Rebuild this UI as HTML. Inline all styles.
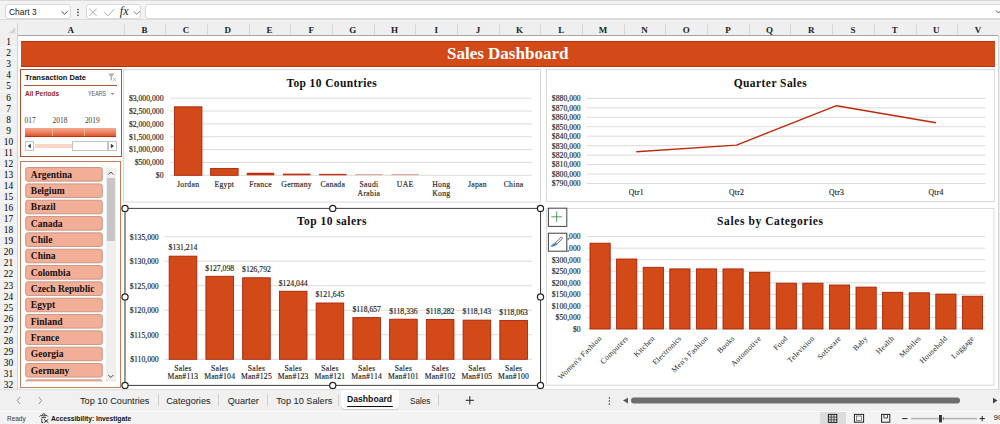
<!DOCTYPE html>
<html><head><meta charset="utf-8"><style>
*{box-sizing:border-box;margin:0;padding:0}
html,body{width:1000px;height:424px;overflow:hidden;background:#fff}
body{position:relative;font-family:"Liberation Sans", sans-serif;color:#222}
.a{position:absolute}
.t{position:absolute;white-space:nowrap;line-height:1}
</style></head><body>

<div class="a" style="left:0;top:0;width:1000px;height:23px;background:#f3f3f3"></div>
<div class="a" style="left:0;top:0;width:1000px;height:1.2px;background:#dadada"></div>
<div class="a" style="left:4.8px;top:4.4px;width:66.4px;height:14.9px;background:#fff;border:1px solid #d8d8d8;border-radius:3px"></div>
<div class="t" style="left:8.5px;top:7.6px;font-size:9.2px;font-family:'Liberation Sans', sans-serif;color:#1a1a1a;transform:scaleX(0.92);transform-origin:0 0">Chart 3</div>
<svg class="a" style="left:0;top:0" width="160" height="23"><path d="M61.5 11.2 L64.6 14.2 L67.7 11.2" fill="none" stroke="#333" stroke-width="0.9"/><circle cx="78" cy="9.6" r="0.8" fill="#333"/><circle cx="78" cy="12.4" r="0.8" fill="#333"/><circle cx="78" cy="15.2" r="0.8" fill="#333"/></svg>
<div class="a" style="left:85.6px;top:4.4px;width:55.4px;height:14.9px;background:#fff;border:1px solid #d8d8d8;border-radius:3px"></div>
<svg class="a" style="left:0;top:0" width="160" height="23"><path d="M89.3 8.6 L96.7 16 M96.7 8.6 L89.3 16" stroke="#a0a0a0" stroke-width="0.9" fill="none"/><path d="M104.3 12.4 L107.8 15.8 L114.6 8.9" stroke="#a0a0a0" stroke-width="0.9" fill="none"/><path d="M133.6 11.2 L136.8 14.2 L140 11.2" fill="none" stroke="#777" stroke-width="0.9"/></svg>
<div class="t" style="left:119.8px;top:5.4px;font-size:12px;font-family:'Liberation Serif', serif;font-style:italic;color:#222">fx</div>
<div class="a" style="left:144.6px;top:4.2px;width:870px;height:15px;background:#fff;border:1px solid #d8d8d8;border-radius:3px"></div>
<svg class="a" style="left:990px;top:0" width="10" height="23"><path d="M6 10.5 L8.5 13 L11 10.5" fill="none" stroke="#444" stroke-width="0.9"/></svg>
<div class="a" style="left:0;top:19.6px;width:1000px;height:16px;background:#efefef"></div>
<div class="a" style="left:0;top:19.2px;width:1000px;height:0.8px;background:#dcdcdc"></div>
<div class="a" style="left:0;top:35.3px;width:1000px;height:1px;background:#a6a6a6"></div>
<div class="a" style="left:0;top:23px;width:18px;height:366px;background:#f0f0f0"></div>
<div class="a" style="left:17.3px;top:23px;width:1px;height:366px;background:#d4d4d4"></div>
<svg class="a" style="left:0;top:0" width="20" height="40"><path d="M8.5 33.2 L15.2 33.2 L15.2 27.2 Z" fill="#d4d4d4"/></svg>
<div class="t" style="left:60.80px;width:20px;text-align:center;top:26px;font-size:9px;font-weight:bold;font-family:'Liberation Serif', serif;color:#222">A</div>
<div class="t" style="left:134.44px;width:20px;text-align:center;top:26px;font-size:9px;font-weight:bold;font-family:'Liberation Serif', serif;color:#222">B</div>
<div class="a" style="left:123.60px;top:24px;width:1px;height:11px;background:#d8d8d8"></div>
<div class="t" style="left:176.12px;width:20px;text-align:center;top:26px;font-size:9px;font-weight:bold;font-family:'Liberation Serif', serif;color:#222">C</div>
<div class="a" style="left:165.28px;top:24px;width:1px;height:11px;background:#d8d8d8"></div>
<div class="t" style="left:217.80px;width:20px;text-align:center;top:26px;font-size:9px;font-weight:bold;font-family:'Liberation Serif', serif;color:#222">D</div>
<div class="a" style="left:206.96px;top:24px;width:1px;height:11px;background:#d8d8d8"></div>
<div class="t" style="left:259.48px;width:20px;text-align:center;top:26px;font-size:9px;font-weight:bold;font-family:'Liberation Serif', serif;color:#222">E</div>
<div class="a" style="left:248.64px;top:24px;width:1px;height:11px;background:#d8d8d8"></div>
<div class="t" style="left:301.16px;width:20px;text-align:center;top:26px;font-size:9px;font-weight:bold;font-family:'Liberation Serif', serif;color:#222">F</div>
<div class="a" style="left:290.32px;top:24px;width:1px;height:11px;background:#d8d8d8"></div>
<div class="t" style="left:342.84px;width:20px;text-align:center;top:26px;font-size:9px;font-weight:bold;font-family:'Liberation Serif', serif;color:#222">G</div>
<div class="a" style="left:332.00px;top:24px;width:1px;height:11px;background:#d8d8d8"></div>
<div class="t" style="left:384.52px;width:20px;text-align:center;top:26px;font-size:9px;font-weight:bold;font-family:'Liberation Serif', serif;color:#222">H</div>
<div class="a" style="left:373.68px;top:24px;width:1px;height:11px;background:#d8d8d8"></div>
<div class="t" style="left:426.20px;width:20px;text-align:center;top:26px;font-size:9px;font-weight:bold;font-family:'Liberation Serif', serif;color:#222">I</div>
<div class="a" style="left:415.36px;top:24px;width:1px;height:11px;background:#d8d8d8"></div>
<div class="t" style="left:467.88px;width:20px;text-align:center;top:26px;font-size:9px;font-weight:bold;font-family:'Liberation Serif', serif;color:#222">J</div>
<div class="a" style="left:457.04px;top:24px;width:1px;height:11px;background:#d8d8d8"></div>
<div class="t" style="left:509.56px;width:20px;text-align:center;top:26px;font-size:9px;font-weight:bold;font-family:'Liberation Serif', serif;color:#222">K</div>
<div class="a" style="left:498.72px;top:24px;width:1px;height:11px;background:#d8d8d8"></div>
<div class="t" style="left:551.24px;width:20px;text-align:center;top:26px;font-size:9px;font-weight:bold;font-family:'Liberation Serif', serif;color:#222">L</div>
<div class="a" style="left:540.40px;top:24px;width:1px;height:11px;background:#d8d8d8"></div>
<div class="t" style="left:592.92px;width:20px;text-align:center;top:26px;font-size:9px;font-weight:bold;font-family:'Liberation Serif', serif;color:#222">M</div>
<div class="a" style="left:582.08px;top:24px;width:1px;height:11px;background:#d8d8d8"></div>
<div class="t" style="left:634.60px;width:20px;text-align:center;top:26px;font-size:9px;font-weight:bold;font-family:'Liberation Serif', serif;color:#222">N</div>
<div class="a" style="left:623.76px;top:24px;width:1px;height:11px;background:#d8d8d8"></div>
<div class="t" style="left:676.28px;width:20px;text-align:center;top:26px;font-size:9px;font-weight:bold;font-family:'Liberation Serif', serif;color:#222">O</div>
<div class="a" style="left:665.44px;top:24px;width:1px;height:11px;background:#d8d8d8"></div>
<div class="t" style="left:717.96px;width:20px;text-align:center;top:26px;font-size:9px;font-weight:bold;font-family:'Liberation Serif', serif;color:#222">P</div>
<div class="a" style="left:707.12px;top:24px;width:1px;height:11px;background:#d8d8d8"></div>
<div class="t" style="left:759.64px;width:20px;text-align:center;top:26px;font-size:9px;font-weight:bold;font-family:'Liberation Serif', serif;color:#222">Q</div>
<div class="a" style="left:748.80px;top:24px;width:1px;height:11px;background:#d8d8d8"></div>
<div class="t" style="left:801.32px;width:20px;text-align:center;top:26px;font-size:9px;font-weight:bold;font-family:'Liberation Serif', serif;color:#222">R</div>
<div class="a" style="left:790.48px;top:24px;width:1px;height:11px;background:#d8d8d8"></div>
<div class="t" style="left:843.00px;width:20px;text-align:center;top:26px;font-size:9px;font-weight:bold;font-family:'Liberation Serif', serif;color:#222">S</div>
<div class="a" style="left:832.16px;top:24px;width:1px;height:11px;background:#d8d8d8"></div>
<div class="t" style="left:884.68px;width:20px;text-align:center;top:26px;font-size:9px;font-weight:bold;font-family:'Liberation Serif', serif;color:#222">T</div>
<div class="a" style="left:873.84px;top:24px;width:1px;height:11px;background:#d8d8d8"></div>
<div class="t" style="left:926.36px;width:20px;text-align:center;top:26px;font-size:9px;font-weight:bold;font-family:'Liberation Serif', serif;color:#222">U</div>
<div class="a" style="left:915.52px;top:24px;width:1px;height:11px;background:#d8d8d8"></div>
<div class="t" style="left:968.04px;width:20px;text-align:center;top:26px;font-size:9px;font-weight:bold;font-family:'Liberation Serif', serif;color:#222">V</div>
<div class="a" style="left:957.20px;top:24px;width:1px;height:11px;background:#d8d8d8"></div>
<div class="t" style="left:0;width:17px;text-align:center;top:38.20px;font-size:9.4px;font-weight:normal;font-family:'Liberation Serif', serif;color:#000">1</div>
<div class="a" style="left:0;top:46.56px;width:17.3px;height:0.7px;background:#f9f9f9"></div>
<div class="t" style="left:0;width:17px;text-align:center;top:49.26px;font-size:9.4px;font-weight:normal;font-family:'Liberation Serif', serif;color:#000">2</div>
<div class="a" style="left:0;top:57.62px;width:17.3px;height:0.7px;background:#f9f9f9"></div>
<div class="t" style="left:0;width:17px;text-align:center;top:60.32px;font-size:9.4px;font-weight:normal;font-family:'Liberation Serif', serif;color:#000">3</div>
<div class="a" style="left:0;top:68.68px;width:17.3px;height:0.7px;background:#f9f9f9"></div>
<div class="t" style="left:0;width:17px;text-align:center;top:71.38px;font-size:9.4px;font-weight:normal;font-family:'Liberation Serif', serif;color:#000">4</div>
<div class="a" style="left:0;top:79.74px;width:17.3px;height:0.7px;background:#f9f9f9"></div>
<div class="t" style="left:0;width:17px;text-align:center;top:82.44px;font-size:9.4px;font-weight:normal;font-family:'Liberation Serif', serif;color:#000">5</div>
<div class="a" style="left:0;top:90.80px;width:17.3px;height:0.7px;background:#f9f9f9"></div>
<div class="t" style="left:0;width:17px;text-align:center;top:93.50px;font-size:9.4px;font-weight:normal;font-family:'Liberation Serif', serif;color:#000">6</div>
<div class="a" style="left:0;top:101.86px;width:17.3px;height:0.7px;background:#f9f9f9"></div>
<div class="t" style="left:0;width:17px;text-align:center;top:104.56px;font-size:9.4px;font-weight:normal;font-family:'Liberation Serif', serif;color:#000">7</div>
<div class="a" style="left:0;top:112.92px;width:17.3px;height:0.7px;background:#f9f9f9"></div>
<div class="t" style="left:0;width:17px;text-align:center;top:115.62px;font-size:9.4px;font-weight:normal;font-family:'Liberation Serif', serif;color:#000">8</div>
<div class="a" style="left:0;top:123.98px;width:17.3px;height:0.7px;background:#f9f9f9"></div>
<div class="t" style="left:0;width:17px;text-align:center;top:126.68px;font-size:9.4px;font-weight:normal;font-family:'Liberation Serif', serif;color:#000">9</div>
<div class="a" style="left:0;top:135.04px;width:17.3px;height:0.7px;background:#f9f9f9"></div>
<div class="t" style="left:0;width:17px;text-align:center;top:137.74px;font-size:9.4px;font-weight:normal;font-family:'Liberation Serif', serif;color:#000">10</div>
<div class="a" style="left:0;top:146.10px;width:17.3px;height:0.7px;background:#f9f9f9"></div>
<div class="t" style="left:0;width:17px;text-align:center;top:148.80px;font-size:9.4px;font-weight:normal;font-family:'Liberation Serif', serif;color:#000">11</div>
<div class="a" style="left:0;top:157.16px;width:17.3px;height:0.7px;background:#f9f9f9"></div>
<div class="t" style="left:0;width:17px;text-align:center;top:159.86px;font-size:9.4px;font-weight:normal;font-family:'Liberation Serif', serif;color:#000">12</div>
<div class="a" style="left:0;top:168.22px;width:17.3px;height:0.7px;background:#f9f9f9"></div>
<div class="t" style="left:0;width:17px;text-align:center;top:170.92px;font-size:9.4px;font-weight:normal;font-family:'Liberation Serif', serif;color:#000">13</div>
<div class="a" style="left:0;top:179.28px;width:17.3px;height:0.7px;background:#f9f9f9"></div>
<div class="t" style="left:0;width:17px;text-align:center;top:181.98px;font-size:9.4px;font-weight:normal;font-family:'Liberation Serif', serif;color:#000">14</div>
<div class="a" style="left:0;top:190.34px;width:17.3px;height:0.7px;background:#f9f9f9"></div>
<div class="t" style="left:0;width:17px;text-align:center;top:193.04px;font-size:9.4px;font-weight:normal;font-family:'Liberation Serif', serif;color:#000">15</div>
<div class="a" style="left:0;top:201.40px;width:17.3px;height:0.7px;background:#f9f9f9"></div>
<div class="t" style="left:0;width:17px;text-align:center;top:204.10px;font-size:9.4px;font-weight:normal;font-family:'Liberation Serif', serif;color:#000">16</div>
<div class="a" style="left:0;top:212.46px;width:17.3px;height:0.7px;background:#f9f9f9"></div>
<div class="t" style="left:0;width:17px;text-align:center;top:215.16px;font-size:9.4px;font-weight:normal;font-family:'Liberation Serif', serif;color:#000">17</div>
<div class="a" style="left:0;top:223.52px;width:17.3px;height:0.7px;background:#f9f9f9"></div>
<div class="t" style="left:0;width:17px;text-align:center;top:226.22px;font-size:9.4px;font-weight:normal;font-family:'Liberation Serif', serif;color:#000">18</div>
<div class="a" style="left:0;top:234.58px;width:17.3px;height:0.7px;background:#f9f9f9"></div>
<div class="t" style="left:0;width:17px;text-align:center;top:237.28px;font-size:9.4px;font-weight:normal;font-family:'Liberation Serif', serif;color:#000">19</div>
<div class="a" style="left:0;top:245.64px;width:17.3px;height:0.7px;background:#f9f9f9"></div>
<div class="t" style="left:0;width:17px;text-align:center;top:248.34px;font-size:9.4px;font-weight:normal;font-family:'Liberation Serif', serif;color:#000">20</div>
<div class="a" style="left:0;top:256.70px;width:17.3px;height:0.7px;background:#f9f9f9"></div>
<div class="t" style="left:0;width:17px;text-align:center;top:259.40px;font-size:9.4px;font-weight:normal;font-family:'Liberation Serif', serif;color:#000">21</div>
<div class="a" style="left:0;top:267.76px;width:17.3px;height:0.7px;background:#f9f9f9"></div>
<div class="t" style="left:0;width:17px;text-align:center;top:270.46px;font-size:9.4px;font-weight:normal;font-family:'Liberation Serif', serif;color:#000">22</div>
<div class="a" style="left:0;top:278.82px;width:17.3px;height:0.7px;background:#f9f9f9"></div>
<div class="t" style="left:0;width:17px;text-align:center;top:281.52px;font-size:9.4px;font-weight:normal;font-family:'Liberation Serif', serif;color:#000">23</div>
<div class="a" style="left:0;top:289.88px;width:17.3px;height:0.7px;background:#f9f9f9"></div>
<div class="t" style="left:0;width:17px;text-align:center;top:292.58px;font-size:9.4px;font-weight:normal;font-family:'Liberation Serif', serif;color:#000">24</div>
<div class="a" style="left:0;top:300.94px;width:17.3px;height:0.7px;background:#f9f9f9"></div>
<div class="t" style="left:0;width:17px;text-align:center;top:303.64px;font-size:9.4px;font-weight:normal;font-family:'Liberation Serif', serif;color:#000">25</div>
<div class="a" style="left:0;top:312.00px;width:17.3px;height:0.7px;background:#f9f9f9"></div>
<div class="t" style="left:0;width:17px;text-align:center;top:314.70px;font-size:9.4px;font-weight:normal;font-family:'Liberation Serif', serif;color:#000">26</div>
<div class="a" style="left:0;top:323.06px;width:17.3px;height:0.7px;background:#f9f9f9"></div>
<div class="t" style="left:0;width:17px;text-align:center;top:325.76px;font-size:9.4px;font-weight:normal;font-family:'Liberation Serif', serif;color:#000">27</div>
<div class="a" style="left:0;top:334.12px;width:17.3px;height:0.7px;background:#f9f9f9"></div>
<div class="t" style="left:0;width:17px;text-align:center;top:336.82px;font-size:9.4px;font-weight:normal;font-family:'Liberation Serif', serif;color:#000">28</div>
<div class="a" style="left:0;top:345.18px;width:17.3px;height:0.7px;background:#f9f9f9"></div>
<div class="t" style="left:0;width:17px;text-align:center;top:347.88px;font-size:9.4px;font-weight:normal;font-family:'Liberation Serif', serif;color:#000">29</div>
<div class="a" style="left:0;top:356.24px;width:17.3px;height:0.7px;background:#f9f9f9"></div>
<div class="t" style="left:0;width:17px;text-align:center;top:358.94px;font-size:9.4px;font-weight:normal;font-family:'Liberation Serif', serif;color:#000">30</div>
<div class="a" style="left:0;top:367.30px;width:17.3px;height:0.7px;background:#f9f9f9"></div>
<div class="t" style="left:0;width:17px;text-align:center;top:370.00px;font-size:9.4px;font-weight:normal;font-family:'Liberation Serif', serif;color:#000">31</div>
<div class="a" style="left:0;top:378.36px;width:17.3px;height:0.7px;background:#f9f9f9"></div>
<div class="t" style="left:0;width:17px;text-align:center;top:381.06px;font-size:9.4px;font-weight:normal;font-family:'Liberation Serif', serif;color:#000">32</div>
<div class="a" style="left:0;top:389.42px;width:17.3px;height:0.7px;background:#f9f9f9"></div>
<div class="a" style="left:20.9px;top:40.8px;width:973.8px;height:25.9px;background:#d34a19;border-top:1px solid #c22d0b;border-bottom:1px solid #c22d0b"></div>
<div class="t" style="left:20.9px;width:973.6px;text-align:center;top:44.6px;font-size:17px;font-weight:bold;font-family:'Liberation Serif', serif;color:#fff">Sales Dashboard</div>
<div class="a" style="left:19.7px;top:68.8px;width:102.2px;height:88.2px;border:1.3px solid #b0502f;background:#fff"></div>
<div class="t" style="left:24.6px;top:73.8px;font-size:8px;font-weight:bold;font-family:'Liberation Sans', sans-serif;color:#111;transform:scaleX(0.946);transform-origin:0 0">Transaction Date</div>
<svg class="a" style="left:100px;top:70px" width="20" height="14"><path d="M8 3.5 L14.5 3.5 L12 6.8 L12 10.5 L10.6 10 L10.6 6.8 Z" fill="#b0b0b0"/><path d="M13 8 L16.3 11.3 M16.3 8 L13 11.3" stroke="#999" stroke-width="0.7"/></svg>
<div class="a" style="left:24.4px;top:84.8px;width:92.6px;height:1px;background:#b4553b"></div>
<div class="t" style="left:24.6px;top:89.6px;font-size:7.6px;font-weight:bold;font-family:'Liberation Sans', sans-serif;color:#8a2a14;transform:scaleX(0.86);transform-origin:0 0">All Periods</div>
<div class="t" style="left:88px;top:91.3px;font-size:6.3px;font-family:'Liberation Sans', sans-serif;color:#555;transform:scaleX(0.85);transform-origin:0 0">YEARS</div>
<svg class="a" style="left:109px;top:90px" width="8" height="8"><path d="M1.6 3 L5.4 3 L3.5 5 Z" fill="#888"/></svg>
<div class="t" style="left:24.6px;top:116.7px;font-size:7.4px;font-family:'Liberation Serif', serif;color:#3a3a3a">017</div>
<div class="t" style="left:52.6px;top:116.7px;font-size:7.4px;font-family:'Liberation Serif', serif;color:#3a3a3a">2018</div>
<div class="t" style="left:84.9px;top:116.7px;font-size:7.4px;font-family:'Liberation Serif', serif;color:#3a3a3a">2019</div>
<div class="a" style="left:24.8px;top:127.5px;width:90.8px;height:9.2px;background:linear-gradient(#f6ab90,#ec8364 45%,#e05a32 85%,#c9300f 92%,#c9300f)"></div>
<div class="a" style="left:51.6px;top:127.5px;width:0.6px;height:8.4px;background:#f3b39e"></div>
<div class="a" style="left:84.1px;top:127.5px;width:0.6px;height:8.4px;background:#f3b39e"></div>
<div class="a" style="left:34.9px;top:144px;width:37px;height:4.2px;background:#f9d5c8"></div>
<div class="a" style="left:71.9px;top:141.3px;width:35.8px;height:9.4px;background:#fff;border:0.8px solid #c4c4c4"></div>
<div class="a" style="left:24.8px;top:141.3px;width:9px;height:9.4px;background:#fff;border:0.8px solid #c4c4c4"></div>
<div class="a" style="left:107.7px;top:141.3px;width:9px;height:9.4px;background:#fff;border:0.8px solid #c4c4c4"></div>
<svg class="a" style="left:0;top:0" width="130" height="160"><path d="M30.8 143.8 L27.8 146 L30.8 148.2 Z" fill="#333"/><path d="M110.9 143.8 L113.9 146 L110.9 148.2 Z" fill="#333"/></svg>
<div class="a" style="left:20.3px;top:161.2px;width:101px;height:226.5px;border:1px solid #c07e60;background:#fff"></div>
<svg class="a" style="left:0;top:0;font-family:'Liberation Serif', serif" width="130" height="400"><defs><clipPath id="cl"><rect x="21" y="162.5" width="100" height="219"/></clipPath></defs><g clip-path="url(#cl)"><rect x="25.7" y="167.55" width="76.6" height="13.6" rx="2" fill="#f3ae98" stroke="#c3917e" stroke-width="0.9"/><text x="30.8" y="177.60" font-size="9.5" font-weight="bold" fill="#111">Argentina</text><rect x="25.7" y="183.88" width="76.6" height="13.6" rx="2" fill="#f3ae98" stroke="#c3917e" stroke-width="0.9"/><text x="30.8" y="193.93" font-size="9.5" font-weight="bold" fill="#111">Belgium</text><rect x="25.7" y="200.21" width="76.6" height="13.6" rx="2" fill="#f3ae98" stroke="#c3917e" stroke-width="0.9"/><text x="30.8" y="210.26" font-size="9.5" font-weight="bold" fill="#111">Brazil</text><rect x="25.7" y="216.54" width="76.6" height="13.6" rx="2" fill="#f3ae98" stroke="#c3917e" stroke-width="0.9"/><text x="30.8" y="226.59" font-size="9.5" font-weight="bold" fill="#111">Canada</text><rect x="25.7" y="232.87" width="76.6" height="13.6" rx="2" fill="#f3ae98" stroke="#c3917e" stroke-width="0.9"/><text x="30.8" y="242.92" font-size="9.5" font-weight="bold" fill="#111">Chile</text><rect x="25.7" y="249.20" width="76.6" height="13.6" rx="2" fill="#f3ae98" stroke="#c3917e" stroke-width="0.9"/><text x="30.8" y="259.25" font-size="9.5" font-weight="bold" fill="#111">China</text><rect x="25.7" y="265.53" width="76.6" height="13.6" rx="2" fill="#f3ae98" stroke="#c3917e" stroke-width="0.9"/><text x="30.8" y="275.58" font-size="9.5" font-weight="bold" fill="#111">Colombia</text><rect x="25.7" y="281.86" width="76.6" height="13.6" rx="2" fill="#f3ae98" stroke="#c3917e" stroke-width="0.9"/><text x="30.8" y="291.91" font-size="9.5" font-weight="bold" fill="#111">Czech Republic</text><rect x="25.7" y="298.19" width="76.6" height="13.6" rx="2" fill="#f3ae98" stroke="#c3917e" stroke-width="0.9"/><text x="30.8" y="308.24" font-size="9.5" font-weight="bold" fill="#111">Egypt</text><rect x="25.7" y="314.52" width="76.6" height="13.6" rx="2" fill="#f3ae98" stroke="#c3917e" stroke-width="0.9"/><text x="30.8" y="324.57" font-size="9.5" font-weight="bold" fill="#111">Finland</text><rect x="25.7" y="330.85" width="76.6" height="13.6" rx="2" fill="#f3ae98" stroke="#c3917e" stroke-width="0.9"/><text x="30.8" y="340.90" font-size="9.5" font-weight="bold" fill="#111">France</text><rect x="25.7" y="347.18" width="76.6" height="13.6" rx="2" fill="#f3ae98" stroke="#c3917e" stroke-width="0.9"/><text x="30.8" y="357.23" font-size="9.5" font-weight="bold" fill="#111">Georgia</text><rect x="25.7" y="363.51" width="76.6" height="13.6" rx="2" fill="#f3ae98" stroke="#c3917e" stroke-width="0.9"/><text x="30.8" y="373.56" font-size="9.5" font-weight="bold" fill="#111">Germany</text><rect x="25.7" y="379.84" width="76.6" height="13.6" rx="2" fill="#f3ae98" stroke="#c3917e" stroke-width="0.9"/></g></svg>
<div class="a" style="left:105.5px;top:167.5px;width:10.5px;height:214px;background:#efefef"></div>
<div class="a" style="left:106.5px;top:178px;width:8.5px;height:63px;background:#c6c6c6"></div>
<svg class="a" style="left:0;top:0" width="130" height="400"><path d="M108.3 174.5 L110.8 172 L113.3 174.5" fill="none" stroke="#333" stroke-width="0.9"/><path d="M108.3 375 L110.8 377.5 L113.3 375" fill="none" stroke="#333" stroke-width="0.9"/></svg>
<svg class="a" style="left:0;top:0;font-family:'Liberation Serif', serif" width="1000" height="424"><rect x="123.6" y="69.4" width="416.9" height="132.7" fill="#fff" stroke="#d9d9d9" stroke-width="1"/><text x="331.80" y="87.09" font-size="11.5" text-anchor="middle" font-weight="bold" fill="#111" letter-spacing="0.39">Top 10 Countries</text><line x1="170.1" x2="531.7" y1="175.30" y2="175.30" stroke="#d9d9d9" stroke-width="0.95"/><text x="163.50" y="178.14" font-size="7.7" text-anchor="end" font-weight="normal" fill="#222" stroke="#222" stroke-width="0.14" >$0</text><line x1="170.1" x2="531.7" y1="162.45" y2="162.45" stroke="#d9d9d9" stroke-width="0.95"/><text x="163.50" y="165.29" font-size="7.7" text-anchor="end" font-weight="normal" fill="#222" stroke="#222" stroke-width="0.14" >$500,000</text><line x1="170.1" x2="531.7" y1="149.60" y2="149.60" stroke="#d9d9d9" stroke-width="0.95"/><text x="163.50" y="152.44" font-size="7.7" text-anchor="end" font-weight="normal" fill="#222" stroke="#222" stroke-width="0.14" >$1,000,000</text><line x1="170.1" x2="531.7" y1="136.75" y2="136.75" stroke="#d9d9d9" stroke-width="0.95"/><text x="163.50" y="139.59" font-size="7.7" text-anchor="end" font-weight="normal" fill="#222" stroke="#222" stroke-width="0.14" >$1,500,000</text><line x1="170.1" x2="531.7" y1="123.90" y2="123.90" stroke="#d9d9d9" stroke-width="0.95"/><text x="163.50" y="126.74" font-size="7.7" text-anchor="end" font-weight="normal" fill="#222" stroke="#222" stroke-width="0.14" >$2,000,000</text><line x1="170.1" x2="531.7" y1="111.05" y2="111.05" stroke="#d9d9d9" stroke-width="0.95"/><text x="163.50" y="113.89" font-size="7.7" text-anchor="end" font-weight="normal" fill="#222" stroke="#222" stroke-width="0.14" >$2,500,000</text><line x1="170.1" x2="531.7" y1="98.20" y2="98.20" stroke="#d9d9d9" stroke-width="0.95"/><text x="163.50" y="101.04" font-size="7.7" text-anchor="end" font-weight="normal" fill="#222" stroke="#222" stroke-width="0.14" >$3,000,000</text><rect x="174.43" y="106.84" width="27.5" height="68.46" fill="#d24a18" stroke="#a91d06" stroke-width="0.85"/><text x="188.18" y="187.24" font-size="7.7" text-anchor="middle" font-weight="normal" fill="#222" stroke="#222" stroke-width="0.14" letter-spacing="0.3">Jordan</text><rect x="210.59" y="168.39" width="27.5" height="6.91" fill="#d24a18" stroke="#a91d06" stroke-width="0.85"/><text x="224.34" y="187.24" font-size="7.7" text-anchor="middle" font-weight="normal" fill="#222" stroke="#222" stroke-width="0.14" letter-spacing="0.3">Egypt</text><rect x="246.75" y="172.74" width="27.5" height="2.56" fill="#c2300e"/><text x="260.50" y="187.24" font-size="7.7" text-anchor="middle" font-weight="normal" fill="#222" stroke="#222" stroke-width="0.14" letter-spacing="0.3">France</text><rect x="282.91" y="173.62" width="27.5" height="1.69" fill="#c2300e"/><text x="296.66" y="187.24" font-size="7.7" text-anchor="middle" font-weight="normal" fill="#222" stroke="#222" stroke-width="0.14" letter-spacing="0.3">Germany</text><rect x="319.07" y="173.87" width="27.5" height="1.43" fill="#c2300e"/><text x="332.82" y="187.24" font-size="7.7" text-anchor="middle" font-weight="normal" fill="#222" stroke="#222" stroke-width="0.14" letter-spacing="0.3">Canada</text><rect x="355.23" y="174.10" width="27.5" height="1" fill="#e0a48e"/><text x="368.98" y="187.24" font-size="7.7" text-anchor="middle" font-weight="normal" fill="#222" stroke="#222" stroke-width="0.14" letter-spacing="0.3">Saudi</text><text x="368.98" y="196.24" font-size="7.7" text-anchor="middle" font-weight="normal" fill="#222" stroke="#222" stroke-width="0.14" letter-spacing="0.3">Arabia</text><rect x="391.39" y="174.10" width="27.5" height="1" fill="#e0a48e"/><text x="405.14" y="187.24" font-size="7.7" text-anchor="middle" font-weight="normal" fill="#222" stroke="#222" stroke-width="0.14" letter-spacing="0.3">UAE</text><text x="441.30" y="187.24" font-size="7.7" text-anchor="middle" font-weight="normal" fill="#222" stroke="#222" stroke-width="0.14" letter-spacing="0.3">Hong</text><text x="441.30" y="196.24" font-size="7.7" text-anchor="middle" font-weight="normal" fill="#222" stroke="#222" stroke-width="0.14" letter-spacing="0.3">Kong</text><text x="477.46" y="187.24" font-size="7.7" text-anchor="middle" font-weight="normal" fill="#222" stroke="#222" stroke-width="0.14" letter-spacing="0.3">Japan</text><text x="513.62" y="187.24" font-size="7.7" text-anchor="middle" font-weight="normal" fill="#222" stroke="#222" stroke-width="0.14" letter-spacing="0.3">China</text><rect x="546.5" y="69.4" width="447.8" height="132.1" fill="#fff" stroke="#d9d9d9" stroke-width="1"/><text x="770.40" y="87.09" font-size="11.5" text-anchor="middle" font-weight="bold" fill="#111" letter-spacing="0.44">Quarter Sales</text><line x1="586.7" x2="985.5" y1="183.50" y2="183.50" stroke="#d9d9d9" stroke-width="0.95"/><text x="580.70" y="186.34" font-size="7.7" text-anchor="end" font-weight="normal" fill="#222" stroke="#222" stroke-width="0.14" >$790,000</text><line x1="586.7" x2="985.5" y1="174.04" y2="174.04" stroke="#d9d9d9" stroke-width="0.95"/><text x="580.70" y="176.88" font-size="7.7" text-anchor="end" font-weight="normal" fill="#222" stroke="#222" stroke-width="0.14" >$800,000</text><line x1="586.7" x2="985.5" y1="164.58" y2="164.58" stroke="#d9d9d9" stroke-width="0.95"/><text x="580.70" y="167.42" font-size="7.7" text-anchor="end" font-weight="normal" fill="#222" stroke="#222" stroke-width="0.14" >$810,000</text><line x1="586.7" x2="985.5" y1="155.12" y2="155.12" stroke="#d9d9d9" stroke-width="0.95"/><text x="580.70" y="157.96" font-size="7.7" text-anchor="end" font-weight="normal" fill="#222" stroke="#222" stroke-width="0.14" >$820,000</text><line x1="586.7" x2="985.5" y1="145.66" y2="145.66" stroke="#d9d9d9" stroke-width="0.95"/><text x="580.70" y="148.50" font-size="7.7" text-anchor="end" font-weight="normal" fill="#222" stroke="#222" stroke-width="0.14" >$830,000</text><line x1="586.7" x2="985.5" y1="136.20" y2="136.20" stroke="#d9d9d9" stroke-width="0.95"/><text x="580.70" y="139.04" font-size="7.7" text-anchor="end" font-weight="normal" fill="#222" stroke="#222" stroke-width="0.14" >$840,000</text><line x1="586.7" x2="985.5" y1="126.74" y2="126.74" stroke="#d9d9d9" stroke-width="0.95"/><text x="580.70" y="129.58" font-size="7.7" text-anchor="end" font-weight="normal" fill="#222" stroke="#222" stroke-width="0.14" >$850,000</text><line x1="586.7" x2="985.5" y1="117.28" y2="117.28" stroke="#d9d9d9" stroke-width="0.95"/><text x="580.70" y="120.12" font-size="7.7" text-anchor="end" font-weight="normal" fill="#222" stroke="#222" stroke-width="0.14" >$860,000</text><line x1="586.7" x2="985.5" y1="107.82" y2="107.82" stroke="#d9d9d9" stroke-width="0.95"/><text x="580.70" y="110.66" font-size="7.7" text-anchor="end" font-weight="normal" fill="#222" stroke="#222" stroke-width="0.14" >$870,000</text><line x1="586.7" x2="985.5" y1="98.36" y2="98.36" stroke="#d9d9d9" stroke-width="0.95"/><text x="580.70" y="101.20" font-size="7.7" text-anchor="end" font-weight="normal" fill="#222" stroke="#222" stroke-width="0.14" >$880,000</text><polyline points="636.3,151.8 736.5,145.1 836.5,105.7 936,122.7" fill="none" stroke="#bd2a0b" stroke-width="1.45" stroke-linejoin="round"/><text x="636.30" y="195.44" font-size="7.7" text-anchor="middle" font-weight="normal" fill="#222" stroke="#222" stroke-width="0.14" letter-spacing="0.25">Qtr1</text><text x="736.50" y="195.44" font-size="7.7" text-anchor="middle" font-weight="normal" fill="#222" stroke="#222" stroke-width="0.14" letter-spacing="0.25">Qtr2</text><text x="836.50" y="195.44" font-size="7.7" text-anchor="middle" font-weight="normal" fill="#222" stroke="#222" stroke-width="0.14" letter-spacing="0.25">Qtr3</text><text x="936.00" y="195.44" font-size="7.7" text-anchor="middle" font-weight="normal" fill="#222" stroke="#222" stroke-width="0.14" letter-spacing="0.25">Qtr4</text><rect x="125" y="208.4" width="415.5" height="177" fill="#fff" stroke="#d9d9d9" stroke-width="1"/><text x="332.00" y="225.09" font-size="11.5" text-anchor="middle" font-weight="bold" fill="#111" letter-spacing="0.45">Top 10 salers</text><line x1="164.6" x2="532" y1="359.30" y2="359.30" stroke="#d9d9d9" stroke-width="0.95"/><text x="158.70" y="362.14" font-size="7.7" text-anchor="end" font-weight="normal" fill="#222" stroke="#222" stroke-width="0.14" >$110,000</text><line x1="164.6" x2="532" y1="334.78" y2="334.78" stroke="#d9d9d9" stroke-width="0.95"/><text x="158.70" y="337.62" font-size="7.7" text-anchor="end" font-weight="normal" fill="#222" stroke="#222" stroke-width="0.14" >$115,000</text><line x1="164.6" x2="532" y1="310.26" y2="310.26" stroke="#d9d9d9" stroke-width="0.95"/><text x="158.70" y="313.10" font-size="7.7" text-anchor="end" font-weight="normal" fill="#222" stroke="#222" stroke-width="0.14" >$120,000</text><line x1="164.6" x2="532" y1="285.74" y2="285.74" stroke="#d9d9d9" stroke-width="0.95"/><text x="158.70" y="288.58" font-size="7.7" text-anchor="end" font-weight="normal" fill="#222" stroke="#222" stroke-width="0.14" >$125,000</text><line x1="164.6" x2="532" y1="261.22" y2="261.22" stroke="#d9d9d9" stroke-width="0.95"/><text x="158.70" y="264.06" font-size="7.7" text-anchor="end" font-weight="normal" fill="#222" stroke="#222" stroke-width="0.14" >$130,000</text><line x1="164.6" x2="532" y1="236.70" y2="236.70" stroke="#d9d9d9" stroke-width="0.95"/><text x="158.70" y="239.54" font-size="7.7" text-anchor="end" font-weight="normal" fill="#222" stroke="#222" stroke-width="0.14" >$135,000</text><rect x="169.17" y="256.14" width="27.6" height="103.16" fill="#d24a18" stroke="#a91d06" stroke-width="0.85"/><text x="182.97" y="250.48" font-size="7.7" text-anchor="middle" font-weight="normal" fill="#222" stroke="#222" stroke-width="0.14" >$131,214</text><text x="182.97" y="371.04" font-size="7.7" text-anchor="middle" font-weight="normal" fill="#222" stroke="#222" stroke-width="0.14" letter-spacing="0.25">Sales</text><text x="182.97" y="379.24" font-size="7.7" text-anchor="middle" font-weight="normal" fill="#222" stroke="#222" stroke-width="0.14" letter-spacing="0.22">Man#113</text><rect x="205.91" y="276.29" width="27.6" height="83.01" fill="#d24a18" stroke="#a91d06" stroke-width="0.85"/><text x="219.71" y="270.63" font-size="7.7" text-anchor="middle" font-weight="normal" fill="#222" stroke="#222" stroke-width="0.14" >$127,098</text><text x="219.71" y="371.04" font-size="7.7" text-anchor="middle" font-weight="normal" fill="#222" stroke="#222" stroke-width="0.14" letter-spacing="0.25">Sales</text><text x="219.71" y="379.24" font-size="7.7" text-anchor="middle" font-weight="normal" fill="#222" stroke="#222" stroke-width="0.14" letter-spacing="0.22">Man#104</text><rect x="242.65" y="277.79" width="27.6" height="81.51" fill="#d24a18" stroke="#a91d06" stroke-width="0.85"/><text x="256.45" y="272.13" font-size="7.7" text-anchor="middle" font-weight="normal" fill="#222" stroke="#222" stroke-width="0.14" >$126,792</text><text x="256.45" y="371.04" font-size="7.7" text-anchor="middle" font-weight="normal" fill="#222" stroke="#222" stroke-width="0.14" letter-spacing="0.25">Sales</text><text x="256.45" y="379.24" font-size="7.7" text-anchor="middle" font-weight="normal" fill="#222" stroke="#222" stroke-width="0.14" letter-spacing="0.22">Man#125</text><rect x="279.39" y="291.24" width="27.6" height="68.06" fill="#d24a18" stroke="#a91d06" stroke-width="0.85"/><text x="293.19" y="285.58" font-size="7.7" text-anchor="middle" font-weight="normal" fill="#222" stroke="#222" stroke-width="0.14" >$124,044</text><text x="293.19" y="371.04" font-size="7.7" text-anchor="middle" font-weight="normal" fill="#222" stroke="#222" stroke-width="0.14" letter-spacing="0.25">Sales</text><text x="293.19" y="379.24" font-size="7.7" text-anchor="middle" font-weight="normal" fill="#222" stroke="#222" stroke-width="0.14" letter-spacing="0.22">Man#123</text><rect x="316.13" y="302.99" width="27.6" height="56.31" fill="#d24a18" stroke="#a91d06" stroke-width="0.85"/><text x="329.93" y="297.33" font-size="7.7" text-anchor="middle" font-weight="normal" fill="#222" stroke="#222" stroke-width="0.14" >$121,645</text><text x="329.93" y="371.04" font-size="7.7" text-anchor="middle" font-weight="normal" fill="#222" stroke="#222" stroke-width="0.14" letter-spacing="0.25">Sales</text><text x="329.93" y="379.24" font-size="7.7" text-anchor="middle" font-weight="normal" fill="#222" stroke="#222" stroke-width="0.14" letter-spacing="0.22">Man#121</text><rect x="352.87" y="317.62" width="27.6" height="41.68" fill="#d24a18" stroke="#a91d06" stroke-width="0.85"/><text x="366.67" y="311.96" font-size="7.7" text-anchor="middle" font-weight="normal" fill="#222" stroke="#222" stroke-width="0.14" >$118,657</text><text x="366.67" y="371.04" font-size="7.7" text-anchor="middle" font-weight="normal" fill="#222" stroke="#222" stroke-width="0.14" letter-spacing="0.25">Sales</text><text x="366.67" y="379.24" font-size="7.7" text-anchor="middle" font-weight="normal" fill="#222" stroke="#222" stroke-width="0.14" letter-spacing="0.22">Man#114</text><rect x="389.61" y="319.19" width="27.6" height="40.11" fill="#d24a18" stroke="#a91d06" stroke-width="0.85"/><text x="403.41" y="313.53" font-size="7.7" text-anchor="middle" font-weight="normal" fill="#222" stroke="#222" stroke-width="0.14" >$118,336</text><text x="403.41" y="371.04" font-size="7.7" text-anchor="middle" font-weight="normal" fill="#222" stroke="#222" stroke-width="0.14" letter-spacing="0.25">Sales</text><text x="403.41" y="379.24" font-size="7.7" text-anchor="middle" font-weight="normal" fill="#222" stroke="#222" stroke-width="0.14" letter-spacing="0.22">Man#101</text><rect x="426.35" y="319.45" width="27.6" height="39.85" fill="#d24a18" stroke="#a91d06" stroke-width="0.85"/><text x="440.15" y="313.79" font-size="7.7" text-anchor="middle" font-weight="normal" fill="#222" stroke="#222" stroke-width="0.14" >$118,282</text><text x="440.15" y="371.04" font-size="7.7" text-anchor="middle" font-weight="normal" fill="#222" stroke="#222" stroke-width="0.14" letter-spacing="0.25">Sales</text><text x="440.15" y="379.24" font-size="7.7" text-anchor="middle" font-weight="normal" fill="#222" stroke="#222" stroke-width="0.14" letter-spacing="0.22">Man#102</text><rect x="463.09" y="320.13" width="27.6" height="39.17" fill="#d24a18" stroke="#a91d06" stroke-width="0.85"/><text x="476.89" y="314.47" font-size="7.7" text-anchor="middle" font-weight="normal" fill="#222" stroke="#222" stroke-width="0.14" >$118,143</text><text x="476.89" y="371.04" font-size="7.7" text-anchor="middle" font-weight="normal" fill="#222" stroke="#222" stroke-width="0.14" letter-spacing="0.25">Sales</text><text x="476.89" y="379.24" font-size="7.7" text-anchor="middle" font-weight="normal" fill="#222" stroke="#222" stroke-width="0.14" letter-spacing="0.22">Man#105</text><rect x="499.83" y="320.52" width="27.6" height="38.78" fill="#d24a18" stroke="#a91d06" stroke-width="0.85"/><text x="513.63" y="314.86" font-size="7.7" text-anchor="middle" font-weight="normal" fill="#222" stroke="#222" stroke-width="0.14" >$118,063</text><text x="513.63" y="371.04" font-size="7.7" text-anchor="middle" font-weight="normal" fill="#222" stroke="#222" stroke-width="0.14" letter-spacing="0.25">Sales</text><text x="513.63" y="379.24" font-size="7.7" text-anchor="middle" font-weight="normal" fill="#222" stroke="#222" stroke-width="0.14" letter-spacing="0.22">Man#100</text><rect x="546.5" y="208.4" width="447.5" height="176.8" fill="#fff" stroke="#d9d9d9" stroke-width="1"/><text x="770.30" y="225.09" font-size="11.5" text-anchor="middle" font-weight="bold" fill="#111" letter-spacing="0.59">Sales by Categories</text><line x1="587.2" x2="985.2" y1="329.00" y2="329.00" stroke="#d9d9d9" stroke-width="0.95"/><text x="580.60" y="331.84" font-size="7.7" text-anchor="end" font-weight="normal" fill="#222" stroke="#222" stroke-width="0.14" >$0</text><line x1="587.2" x2="985.2" y1="317.45" y2="317.45" stroke="#d9d9d9" stroke-width="0.95"/><text x="580.60" y="320.29" font-size="7.7" text-anchor="end" font-weight="normal" fill="#222" stroke="#222" stroke-width="0.14" >$50,000</text><line x1="587.2" x2="985.2" y1="305.90" y2="305.90" stroke="#d9d9d9" stroke-width="0.95"/><text x="580.60" y="308.74" font-size="7.7" text-anchor="end" font-weight="normal" fill="#222" stroke="#222" stroke-width="0.14" >$100,000</text><line x1="587.2" x2="985.2" y1="294.35" y2="294.35" stroke="#d9d9d9" stroke-width="0.95"/><text x="580.60" y="297.19" font-size="7.7" text-anchor="end" font-weight="normal" fill="#222" stroke="#222" stroke-width="0.14" >$150,000</text><line x1="587.2" x2="985.2" y1="282.80" y2="282.80" stroke="#d9d9d9" stroke-width="0.95"/><text x="580.60" y="285.64" font-size="7.7" text-anchor="end" font-weight="normal" fill="#222" stroke="#222" stroke-width="0.14" >$200,000</text><line x1="587.2" x2="985.2" y1="271.25" y2="271.25" stroke="#d9d9d9" stroke-width="0.95"/><text x="580.60" y="274.09" font-size="7.7" text-anchor="end" font-weight="normal" fill="#222" stroke="#222" stroke-width="0.14" >$250,000</text><line x1="587.2" x2="985.2" y1="259.70" y2="259.70" stroke="#d9d9d9" stroke-width="0.95"/><text x="580.60" y="262.54" font-size="7.7" text-anchor="end" font-weight="normal" fill="#222" stroke="#222" stroke-width="0.14" >$300,000</text><line x1="587.2" x2="985.2" y1="248.15" y2="248.15" stroke="#d9d9d9" stroke-width="0.95"/><text x="580.60" y="250.99" font-size="7.7" text-anchor="end" font-weight="normal" fill="#222" stroke="#222" stroke-width="0.14" >$350,000</text><line x1="587.2" x2="985.2" y1="236.60" y2="236.60" stroke="#d9d9d9" stroke-width="0.95"/><text x="580.60" y="239.44" font-size="7.7" text-anchor="end" font-weight="normal" fill="#222" stroke="#222" stroke-width="0.14" >$400,000</text><rect x="590.00" y="243.20" width="20.2" height="85.80" fill="#d24a18" stroke="#a91d06" stroke-width="0.85"/><text transform="translate(600.30,337.20) rotate(-45)" x="0" y="2.5" font-size="7.7" letter-spacing="0.25" text-anchor="end" fill="#222">Women&#39;s Fashion</text><rect x="616.60" y="259.00" width="20.2" height="70.00" fill="#d24a18" stroke="#a91d06" stroke-width="0.85"/><text transform="translate(626.90,337.20) rotate(-45)" x="0" y="2.5" font-size="7.7" letter-spacing="0.25" text-anchor="end" fill="#222">Computers</text><rect x="643.20" y="267.30" width="20.2" height="61.70" fill="#d24a18" stroke="#a91d06" stroke-width="0.85"/><text transform="translate(653.50,337.20) rotate(-45)" x="0" y="2.5" font-size="7.7" letter-spacing="0.25" text-anchor="end" fill="#222">Kitchen</text><rect x="669.80" y="268.90" width="20.2" height="60.10" fill="#d24a18" stroke="#a91d06" stroke-width="0.85"/><text transform="translate(680.10,337.20) rotate(-45)" x="0" y="2.5" font-size="7.7" letter-spacing="0.25" text-anchor="end" fill="#222">Electronics</text><rect x="696.40" y="268.90" width="20.2" height="60.10" fill="#d24a18" stroke="#a91d06" stroke-width="0.85"/><text transform="translate(706.70,337.20) rotate(-45)" x="0" y="2.5" font-size="7.7" letter-spacing="0.25" text-anchor="end" fill="#222">Men&#39;s Fashion</text><rect x="723.00" y="268.90" width="20.2" height="60.10" fill="#d24a18" stroke="#a91d06" stroke-width="0.85"/><text transform="translate(733.30,337.20) rotate(-45)" x="0" y="2.5" font-size="7.7" letter-spacing="0.25" text-anchor="end" fill="#222">Books</text><rect x="749.60" y="272.30" width="20.2" height="56.70" fill="#d24a18" stroke="#a91d06" stroke-width="0.85"/><text transform="translate(759.90,337.20) rotate(-45)" x="0" y="2.5" font-size="7.7" letter-spacing="0.25" text-anchor="end" fill="#222">Automotive</text><rect x="776.20" y="283.20" width="20.2" height="45.80" fill="#d24a18" stroke="#a91d06" stroke-width="0.85"/><text transform="translate(786.50,337.20) rotate(-45)" x="0" y="2.5" font-size="7.7" letter-spacing="0.25" text-anchor="end" fill="#222">Food</text><rect x="802.80" y="283.20" width="20.2" height="45.80" fill="#d24a18" stroke="#a91d06" stroke-width="0.85"/><text transform="translate(813.10,337.20) rotate(-45)" x="0" y="2.5" font-size="7.7" letter-spacing="0.25" text-anchor="end" fill="#222">Television</text><rect x="829.40" y="285.00" width="20.2" height="44.00" fill="#d24a18" stroke="#a91d06" stroke-width="0.85"/><text transform="translate(839.70,337.20) rotate(-45)" x="0" y="2.5" font-size="7.7" letter-spacing="0.25" text-anchor="end" fill="#222">Software</text><rect x="856.00" y="287.10" width="20.2" height="41.90" fill="#d24a18" stroke="#a91d06" stroke-width="0.85"/><text transform="translate(866.30,337.20) rotate(-45)" x="0" y="2.5" font-size="7.7" letter-spacing="0.25" text-anchor="end" fill="#222">Baby</text><rect x="882.60" y="292.30" width="20.2" height="36.70" fill="#d24a18" stroke="#a91d06" stroke-width="0.85"/><text transform="translate(892.90,337.20) rotate(-45)" x="0" y="2.5" font-size="7.7" letter-spacing="0.25" text-anchor="end" fill="#222">Health</text><rect x="909.20" y="292.80" width="20.2" height="36.20" fill="#d24a18" stroke="#a91d06" stroke-width="0.85"/><text transform="translate(919.50,337.20) rotate(-45)" x="0" y="2.5" font-size="7.7" letter-spacing="0.25" text-anchor="end" fill="#222">Mobiles</text><rect x="935.80" y="294.10" width="20.2" height="34.90" fill="#d24a18" stroke="#a91d06" stroke-width="0.85"/><text transform="translate(946.10,337.20) rotate(-45)" x="0" y="2.5" font-size="7.7" letter-spacing="0.25" text-anchor="end" fill="#222">Household</text><rect x="962.40" y="296.20" width="20.2" height="32.80" fill="#d24a18" stroke="#a91d06" stroke-width="0.85"/><text transform="translate(972.70,337.20) rotate(-45)" x="0" y="2.5" font-size="7.7" letter-spacing="0.25" text-anchor="end" fill="#222">Luggage</text><rect x="548.4" y="208.2" width="18.4" height="18.2" fill="#fff" stroke="#444" stroke-width="1"/><path d="M556.7 211.4 V222.2 M551.3 216.8 H562.1" stroke="#1f8a3c" stroke-width="0.8"/><rect x="548.4" y="233.2" width="18.4" height="18" fill="#fff" stroke="#444" stroke-width="1"/><path d="M561.3 236.9 L562.6 238.2 L556.8 244.3 L555.4 243 Z" fill="#fff" stroke="#333" stroke-width="0.7"/><path d="M555.6 242.9 Q552.6 243.2 550.8 246.4 Q554.6 246.8 556.8 244.4 Z" fill="#4a8fe0" stroke="#2e6bb8" stroke-width="0.4"/><rect x="125" y="208.4" width="415.5" height="177" fill="none" stroke="#444" stroke-width="1"/><circle cx="125" cy="208.4" r="3.1" fill="#fff" stroke="#222" stroke-width="1.2"/><circle cx="332.75" cy="208.4" r="3.1" fill="#fff" stroke="#222" stroke-width="1.2"/><circle cx="540.5" cy="208.4" r="3.1" fill="#fff" stroke="#222" stroke-width="1.2"/><circle cx="125" cy="296.9" r="3.1" fill="#fff" stroke="#222" stroke-width="1.2"/><circle cx="540.5" cy="296.9" r="3.1" fill="#fff" stroke="#222" stroke-width="1.2"/><circle cx="125" cy="385.4" r="3.1" fill="#fff" stroke="#222" stroke-width="1.2"/><circle cx="332.75" cy="385.4" r="3.1" fill="#fff" stroke="#222" stroke-width="1.2"/><circle cx="540.5" cy="385.4" r="3.1" fill="#fff" stroke="#222" stroke-width="1.2"/></svg>
<div class="a" style="left:998.3px;top:35.3px;width:1.7px;height:355px;background:#ececec;border-left:0.8px solid #d4d4d4"></div>
<div class="a" style="left:0;top:389.6px;width:1000px;height:21.4px;background:#f0f0f0"></div>
<div class="a" style="left:0;top:389.4px;width:1000px;height:0.8px;background:#e0e0e0"></div>
<svg class="a" style="left:0;top:385px" width="60" height="25"><path d="M20 12 L17.2 15.5 L20 19" fill="none" stroke="#888" stroke-width="0.9"/><path d="M38.8 12 L41.6 15.5 L38.8 19" fill="none" stroke="#888" stroke-width="0.9"/></svg>
<div class="t" style="left:80px;top:396.8px;font-size:9.2px;font-family:'Liberation Sans', sans-serif;color:#222">Top 10 Countries</div>
<div class="a" style="left:157.5px;top:394.4px;width:0.8px;height:12px;background:#d0d0d0"></div>
<div class="t" style="left:166.2px;top:396.8px;font-size:9.2px;font-family:'Liberation Sans', sans-serif;color:#222">Categories</div>
<div class="a" style="left:218.3px;top:394.4px;width:0.8px;height:12px;background:#d0d0d0"></div>
<div class="t" style="left:227.7px;top:396.8px;font-size:9.2px;font-family:'Liberation Sans', sans-serif;color:#222">Quarter</div>
<div class="a" style="left:267.3px;top:394.4px;width:0.8px;height:12px;background:#d0d0d0"></div>
<div class="t" style="left:276.2px;top:396.8px;font-size:9.2px;font-family:'Liberation Sans', sans-serif;color:#222">Top 10 Salers</div>
<div class="a" style="left:338.2px;top:393.8px;width:0.8px;height:12.5px;background:#d0d0d0"></div>
<div class="a" style="left:341px;top:389.8px;width:58px;height:19px;background:#fff;border-radius:0 0 4px 4px;box-shadow:0 0.5px 1px rgba(0,0,0,0.15)"></div>
<div class="t" style="left:347px;top:394.6px;font-size:9.2px;font-weight:bold;font-family:'Liberation Sans', sans-serif;color:#111;transform:scaleX(0.94);transform-origin:0 0">Dashboard</div>
<div class="a" style="left:347px;top:405.6px;width:45.8px;height:1.4px;background:#111;border-radius:1px"></div>
<div class="t" style="left:409.6px;top:396.8px;font-size:9.2px;font-family:'Liberation Sans', sans-serif;color:#222;transform:scaleX(0.89);transform-origin:0 0">Sales</div>
<div class="a" style="left:438.3px;top:394.4px;width:0.8px;height:12px;background:#d0d0d0"></div>
<svg class="a" style="left:460px;top:390px" width="20" height="20"><path d="M9.8 6.2 V14.4 M5.7 10.3 H13.9" stroke="#222" stroke-width="1"/></svg>
<svg class="a" style="left:600px;top:390px" width="400" height="21"><circle cx="9.4" cy="8" r="0.75" fill="#333"/><circle cx="9.4" cy="11" r="0.75" fill="#333"/><circle cx="9.4" cy="14" r="0.75" fill="#333"/><path d="M23 10.6 L28 7.8 L28 13.4 Z" fill="#555"/><rect x="31" y="7.6" width="329" height="5.8" rx="2.9" fill="#6e6e6e"/><path d="M397.5 10.6 L393 7.8 L393 13.4 Z" fill="#444"/></svg>
<div class="a" style="left:0;top:411px;width:1000px;height:13px;background:#f3f3f3"></div>
<div class="a" style="left:0;top:410.6px;width:1000px;height:0.9px;background:#fbfbfb"></div>
<div class="t" style="left:6.9px;top:414.9px;font-size:7.2px;font-family:'Liberation Sans', sans-serif;color:#333;transform:scaleX(0.9);transform-origin:0 0">Ready</div>
<svg class="a" style="left:36px;top:411px" width="14" height="13"><circle cx="7.8" cy="3.9" r="1.25" fill="none" stroke="#222" stroke-width="0.9"/><path d="M3.6 5.6 Q4.6 3.6 6.4 4.6 M12 5.6 Q11 3.6 9.2 4.6 M5.4 6.2 Q7.8 7.4 10.2 6.2" fill="none" stroke="#222" stroke-width="0.9"/><path d="M5.8 7.4 V11.6 H7.2 M8 8.2 L12.4 11.8 M12.4 8.2 L8 11.8" fill="none" stroke="#222" stroke-width="0.9"/></svg>
<div class="t" style="left:51.4px;top:414.8px;font-size:7.9px;font-weight:bold;font-family:'Liberation Sans', sans-serif;color:#111;transform:scaleX(0.85);transform-origin:0 0">Accessibility: Investigate</div>
<div class="a" style="left:819.7px;top:411.8px;width:26.3px;height:12.2px;background:#dcdcdc"></div>
<svg class="a" style="left:800px;top:411px" width="200" height="13"><rect x="28.4" y="3.4" width="8.4" height="8" fill="none" stroke="#222" stroke-width="1"/><path d="M31.2 3.4 V11.4 M34 3.4 V11.4 M28.4 6.1 H36.8 M28.4 8.8 H36.8" stroke="#222" stroke-width="0.7"/><rect x="54.4" y="3.4" width="9.2" height="7.8" fill="none" stroke="#222" stroke-width="1"/><rect x="56.6" y="5" width="4.8" height="4.6" fill="none" stroke="#444" stroke-width="0.6"/><rect x="81.6" y="3.4" width="8.2" height="7.8" fill="none" stroke="#222" stroke-width="1"/><path d="M84 3.4 V7 H87.5 V3.4" stroke="#222" stroke-width="0.8" fill="none"/><path d="M102.2 7.6 H107.4" stroke="#222" stroke-width="1"/><rect x="111.2" y="6.8" width="65.7" height="1.6" fill="#b4b4b4"/><rect x="139" y="4" width="2.9" height="7.4" fill="#333"/><rect x="143.2" y="6" width="0.7" height="3.2" fill="#666"/><path d="M179.6 7.6 H184.8 M182.2 5 V10.2" stroke="#222" stroke-width="1"/></svg>
<div class="t" style="left:993.5px;top:414.2px;font-size:8px;font-family:'Liberation Sans', sans-serif;color:#222">90%</div>
</body></html>
